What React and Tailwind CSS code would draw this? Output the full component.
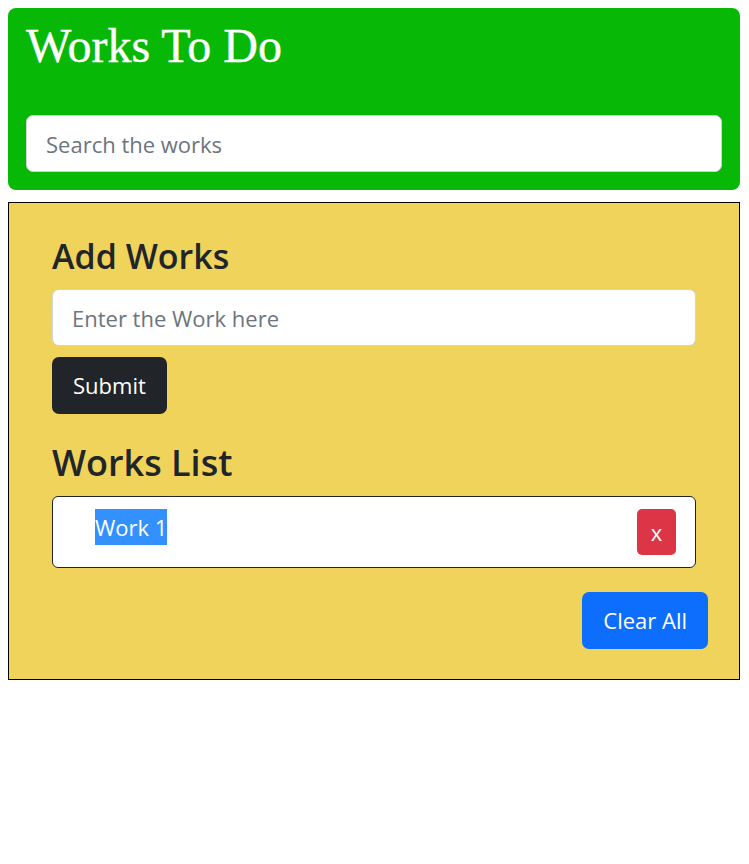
import React, { useState } from "react";

const App = () => {
  const [works, setWorks] = useState(["Work 1"]);
  const [search, setSearch] = useState("");
  const [work, setWork] = useState("");

  const handleSubmit = (e) => {
    e.preventDefault();
    if (!work) return;
    setWorks((prev) => [...prev, work]);
    setWork("");
  };

  const shown = works.filter((w) =>
    w.toLowerCase().includes(search.toLowerCase())
  );

  return (
    <div className="p-2 pr-[9px] font-['Open_Sans',sans-serif] text-[#212529]">
      {/* Header */}
      <div className="rounded-lg bg-[#07b807] px-[18px] pt-[9px] pb-[18px]">
        <h1 className="font-['Liberation_Serif',serif] text-[48px] leading-[58px] text-white [-webkit-text-stroke:0.4px_white]">
          Works To Do
        </h1>
        <input
          className="mt-10 block h-[57px] w-full rounded-[7px] border border-[#ced4da] bg-white px-[19px] text-[22px] text-[#212529] placeholder:text-[#6c757d] focus:outline-none"
          type="text"
          placeholder="Search the works"
          value={search}
          onChange={(e) => setSearch(e.target.value)}
        />
      </div>

      {/* Add + list */}
      <div className="mt-3 border border-black bg-[#efd35a] px-[43px] pt-[30px] pb-[30px]">
        <h2 className="text-[34px] font-semibold leading-[46px]">Add Works</h2>
        <form onSubmit={handleSubmit}>
          <input
            className="mt-[10px] block h-[57px] w-full rounded-[7px] border border-[#ced4da] bg-white px-[19px] text-[22px] placeholder:text-[#6c757d] focus:outline-none"
            type="text"
            placeholder="Enter the Work here"
            value={work}
            onChange={(e) => setWork(e.target.value)}
          />
          <button
            className="mt-[11px] h-[57px] rounded-[7px] bg-[#212529] px-[21px] text-[22px] text-white"
            type="submit"
          >
            Submit
          </button>
        </form>

        <h2 className="mt-[26px] text-[36px] font-semibold leading-[46px]">
          Works List
        </h2>
        <ul className="mt-[10px]">
          {shown.map((w, i) => (
            <li
              key={i}
              className="flex items-start justify-between rounded-[6px] border border-[#212529] bg-white py-3 pr-[19px] pl-[42px]"
            >
              <span className="bg-[#3390ff] text-[22px] leading-[36px] text-white">
                {w}
              </span>
              <button
                className="h-[46px] w-[39px] rounded-[5px] bg-[#dc3545] text-[22px] text-white"
                onClick={() => setWorks(works.filter((_, j) => j !== i))}
              >
                x
              </button>
            </li>
          ))}
        </ul>
        <div className="mt-6 -mr-3 flex justify-end">
          <button
            className="h-[57px] rounded-[7px] bg-[#0d6efd] px-[21px] text-[22px] text-white"
            onClick={() => setWorks([])}
          >
            Clear All
          </button>
        </div>
      </div>
    </div>
  );
};

export default App;
